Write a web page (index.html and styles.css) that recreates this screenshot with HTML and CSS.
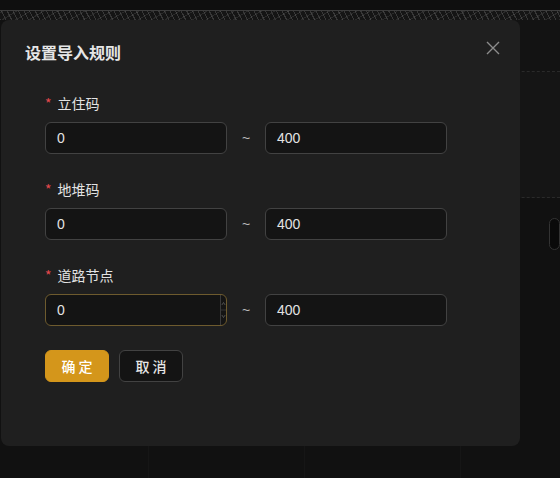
FILE: index.html
```html
<!DOCTYPE html>
<html>
<head>
    <meta charset="utf-8">
    <title>设置导入规则</title>
    <link rel="stylesheet" href="styles.css">
</head>
<body>
    <div class="page">
        <div class="topbar"></div>
        <div class="noise"></div>
        <div class="main">
            <div class="col"></div>
            <div class="col"></div>
            <div class="col"></div>
            <div class="col side">
                <div class="side-head"></div>
                <div class="side-band"></div>
                <div class="side-box"></div>
            </div>
        </div>
    </div>

    <div class="modal">
        <div class="modal-title">设置导入规则</div>
        <button class="close" aria-label="close">
            <svg width="14" height="14" viewBox="0 0 14 14"><path d="M1 1L13 13M13 1L1 13" stroke="#8c8c8c" stroke-width="1.4" fill="none"/></svg>
        </button>
        <form class="rules">
            <div class="item">
                <label><span class="req">*</span>立住码</label>
                <div class="range">
                    <div class="num">0</div>
                    <span class="tilde">~</span>
                    <div class="num">400</div>
                </div>
            </div>
            <div class="item">
                <label><span class="req">*</span>地堆码</label>
                <div class="range">
                    <div class="num">0</div>
                    <span class="tilde">~</span>
                    <div class="num">400</div>
                </div>
            </div>
            <div class="item">
                <label><span class="req">*</span>道路节点</label>
                <div class="range">
                    <div class="num hover">0
                        <span class="handler">
                            <svg width="6" height="30" viewBox="0 0 6 30"><path d="M1 9L3 6L5 9M1 21L3 24L5 21" stroke="#6b6b6b" stroke-width="0.8" fill="none"/><path d="M0 15H6" stroke="#3a3a3a" stroke-width="1"/></svg>
                        </span>
                    </div>
                    <span class="tilde">~</span>
                    <div class="num">400</div>
                </div>
            </div>
            <div class="actions">
                <button type="button" class="btn primary">确 定</button>
                <button type="button" class="btn">取 消</button>
            </div>
        </form>
    </div>
</body>
</html>
```

FILE: styles.css
```css
* {
    margin: 0;
    padding: 0;
    box-sizing: border-box;
}

body {
    width: 560px;
    height: 478px;
    overflow: hidden;
    background-color: #111111;
    font-family: "Noto Sans CJK SC", "Noto Sans", sans-serif;
    font-size: 14px;
    color: #e3e3e3;
    position: relative;
}

/* page behind the dialog */
.page {
    height: 100%;
    display: flex;
    flex-direction: column;
}
.topbar {
    height: 11px;
    background-color: #0f0f0f;
    border-bottom: 1px solid #3d3d3d;
}
.noise {
    height: 9px;
    background-color: #151515;
    background-image:
        repeating-linear-gradient(63deg, rgba(120,120,120,0.35) 0 1px, transparent 1px 5px),
        repeating-linear-gradient(-31deg, rgba(90,90,90,0.3) 0 1px, transparent 1px 7px);
}
.main {
    flex: 1;
    display: grid;
    grid-template-columns: 149px 156px 156px 1fr;
}
.col {
    border-right: 1px solid #161616;
    background-color: #111111;
}
.side {
    border-right: none;
    display: flex;
    flex-direction: column;
}
.side-head {
    height: 52px;
    background-color: #131313;
    border-bottom: 1px dashed #2a2a2a;
}
.side-band {
    height: 126px;
    background-color: #151515;
    border-bottom: 1px dashed #2a2a2a;
}
.side-box {
    margin: 20px 0 0 88px;
    height: 32px;
    border: 1px solid #333;
    border-radius: 6px;
    background-color: #0a0a0a;
}

/* dialog */
.modal {
    position: absolute;
    left: 1px;
    top: 20px;
    width: 519px;
    height: 426px;
    background-color: #1f1f1f;
    border-radius: 8px;
    padding: 20px 24px;
}
.modal-title {
    font-size: 16px;
    font-weight: 700;
    line-height: 24px;
    height: 24px;
    color: #e6e6e6;
}
.close {
    position: absolute;
    top: 21px;
    right: 20px;
    width: 14px;
    height: 14px;
    border: none;
    background: none;
    display: flex;
}

.rules {
    margin: 28px 0 0 20px;
}
.item {
    height: 62px;
    margin-bottom: 24px;
}
.item label {
    display: block;
    height: 22px;
    line-height: 22px;
    margin-bottom: 8px;
    color: #e3e3e3;
}
.req {
    color: #e5484d;
    margin-right: 6px;
}
.range {
    display: flex;
    align-items: center;
    height: 32px;
}
.num {
    position: relative;
    width: 182px;
    height: 32px;
    line-height: 30px;
    padding: 0 11px;
    background-color: #141414;
    border: 1px solid #424242;
    border-radius: 6px;
    font-family: "Liberation Sans", sans-serif;
    font-size: 14px;
    color: #e3e3e3;
}
.num.hover {
    border-color: #6e5b2e;
}
.handler {
    position: absolute;
    right: 0;
    top: 0;
    width: 6px;
    height: 30px;
    border-left: 1px solid #3a3a3a;
    display: flex;
}
.tilde {
    width: 38px;
    text-align: center;
    color: #bdbdbd;
    font-family: "Liberation Sans", sans-serif;
}

.actions {
    display: flex;
    gap: 10px;
}
.btn {
    width: 64px;
    height: 32px;
    border-radius: 6px;
    border: 1px solid #424242;
    background-color: #141414;
    color: #e6e6e6;
    font-family: "Noto Sans CJK SC", sans-serif;
    font-size: 14px;
    font-weight: 500;
}
.btn.primary {
    background-color: #d4961b;
    border-color: #d4961b;
    color: #ffffff;
}
```
